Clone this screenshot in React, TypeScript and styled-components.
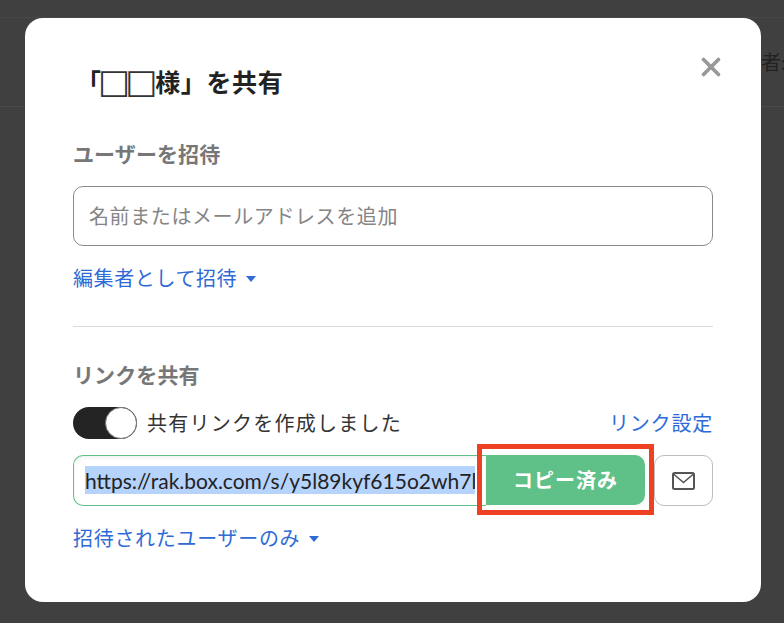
import React from 'react';
import styled, { createGlobalStyle } from 'styled-components';
import { X } from 'lucide-react';

const JP = `"Lato", "Noto Sans CJK JP", sans-serif`;

const Global = createGlobalStyle`
    html, body {
        margin: 0;
        padding: 0;
        background: #404040;
    }
    *, *::before, *::after {
        box-sizing: border-box;
    }
`;

const App = () => {
    return (
        <Page>
            <Global />
            <BehindBar>
                <span>者:</span>
            </BehindBar>
            <Modal>
                <CloseBtn>
                    <X size={30} strokeWidth={3} color="#999" />
                </CloseBtn>
                <Title><Bracket>「</Bracket><Masked>□□</Masked>様」を共有</Title>
                <SectionLabel>ユーザーを招待</SectionLabel>
                <NameInput>名前またはメールアドレスを追加</NameInput>
                <Dropdown>編集者として招待<Caret /></Dropdown>
                <Divider />
                <SectionLabel className="second">リンクを共有</SectionLabel>
                <ToggleRow>
                    <ToggleWrap>
                        <Toggle />
                        <ToggleText>共有リンクを作成しました</ToggleText>
                    </ToggleWrap>
                    <LinkText>リンク設定</LinkText>
                </ToggleRow>
                <UrlRow>
                    <UrlBox>
                        <Selected>https://rak.box.com/s/y5l89kyf615o2wh7l</Selected>
                    </UrlBox>
                    <CopyBtn>コピー済み</CopyBtn>
                    <MailBtn>
                        <svg width="23" height="18" viewBox="0 0 23 18" fill="none" stroke="#555" strokeWidth="2">
                            <rect x="1" y="1" width="21" height="16" rx="1.5" />
                            <path d="M1.5 2 L11.5 10.5 L21.5 2" strokeWidth="1.6" />
                        </svg>
                    </MailBtn>
                </UrlRow>
                <Dropdown className="bottom">招待されたユーザーのみ<Caret /></Dropdown>
            </Modal>
        </Page>
    );
};

const Page = styled.div`
    position: relative;
    width: 784px;
    height: 623px;
    overflow: hidden;
    padding: 18px 0 0 25px;
    background: #404040;
    font-family: ${JP};
`;

const BehindBar = styled.div`
    position: absolute;
    top: 17px;
    left: 0;
    width: 784px;
    height: 90px;
    border-top: 1px solid #474747;
    border-bottom: 1px solid #4a4a4a;
    display: flex;
    justify-content: flex-end;
    align-items: center;
    span {
        width: 23px;
        overflow: hidden;
        white-space: nowrap;
        font-size: 20px;
        color: #222;
        margin-bottom: 2px;
    }
`;

const Modal = styled.div`
    position: relative;
    width: 736px;
    height: 584px;
    background: #fff;
    border-radius: 18px;
    padding: 44px 48px 0 48px;
`;

const CloseBtn = styled.div`
    position: absolute;
    top: 34px;
    right: 35px;
    width: 30px;
    height: 30px;
`;

const Title = styled.div`
    display: flex;
    align-items: center;
    height: 38px;
    margin-left: 3px;
    font-size: 25px;
    font-weight: 700;
    letter-spacing: 0.6px;
    color: #222;
    white-space: nowrap;
`;

const Bracket = styled.span`
    letter-spacing: -3px;
`;

const Masked = styled.span`
    margin-right: 3px;
    font-family: "DejaVu Sans", sans-serif;
    font-size: 34px;
    font-weight: 700;
    letter-spacing: -5px;
    line-height: 38px;
    color: #333;
`;

const SectionLabel = styled.div`
    margin-top: 39px;
    height: 30px;
    line-height: 30px;
    font-size: 21px;
    font-weight: 700;
    letter-spacing: 0.1px;
    color: #777;
    &.second {
        margin-top: 33px;
    }
`;

const NameInput = styled.div`
    margin-top: 17px;
    height: 60px;
    line-height: 58px;
    border: 1px solid #8a8a8a;
    border-radius: 10px;
    padding-left: 15px;
    font-size: 20px;
    letter-spacing: 0.6px;
    color: #858585;
`;

const Dropdown = styled.div`
    margin-top: 16px;
    display: flex;
    align-items: center;
    height: 30px;
    font-size: 20px;
    letter-spacing: 0.6px;
    color: #2f6bd6;
    &.bottom {
        margin-top: 16px;
        letter-spacing: 0.7px;
    }
`;

const Caret = styled.i`
    margin-left: 9px;
    margin-top: 3px;
    border-left: 5.5px solid transparent;
    border-right: 5.5px solid transparent;
    border-top: 6px solid #2f6bd6;
`;

const Divider = styled.div`
    margin-top: 34px;
    height: 1px;
    background: #dcdcdc;
`;

const ToggleRow = styled.div`
    margin-top: 17px;
    display: flex;
    justify-content: space-between;
    align-items: center;
    height: 32px;
`;

const ToggleWrap = styled.div`
    display: flex;
    align-items: center;
`;

const Toggle = styled.div`
    position: relative;
    width: 64px;
    height: 32px;
    border-radius: 16px;
    background: #242424;
    &::after {
        content: '';
        position: absolute;
        top: 0;
        right: 0;
        width: 32px;
        height: 32px;
        border-radius: 50%;
        background: #fff;
        border: 1px solid #777;
    }
`;

const ToggleText = styled.span`
    margin-left: 10px;
    padding-bottom: 2px;
    font-size: 20px;
    letter-spacing: 1.25px;
    color: #333;
`;

const LinkText = styled.span`
    padding-bottom: 2px;
    font-size: 20px;
    letter-spacing: 0.8px;
    color: #2f6bd6;
`;

const UrlRow = styled.div`
    margin-top: 16px;
    display: flex;
    height: 51px;
`;

const UrlBox = styled.div`
    width: 413px;
    height: 51px;
    border: 1px solid #5fc088;
    border-right: none;
    border-radius: 10px 0 0 10px;
    padding: 10px 0 0 11px;
    overflow: hidden;
    box-shadow: inset 0 2px 4px rgba(0, 0, 0, 0.06);
`;

const Selected = styled.div`
    width: 390px;
    height: 28px;
    line-height: 29px;
    overflow: hidden;
    white-space: nowrap;
    background: #b5d3fb;
    font-size: 21px;
    color: #222;
`;

const CopyBtn = styled.div`
    position: relative;
    width: 159px;
    height: 50px;
    line-height: 50px;
    text-align: center;
    background: #5fc088;
    border-radius: 0 10px 10px 0;
    font-size: 20px;
    font-weight: 700;
    letter-spacing: 1px;
    color: #fff;
    &::after {
        content: '';
        position: absolute;
        top: -11px;
        left: -9px;
        width: 177px;
        height: 71px;
        border: 5px solid #ee4023;
    }
`;

const MailBtn = styled.div`
    margin-left: 9px;
    width: 59px;
    height: 51px;
    border: 1px solid #bdbdbd;
    border-radius: 10px;
    display: flex;
    align-items: center;
    justify-content: center;
`;

export default App;
